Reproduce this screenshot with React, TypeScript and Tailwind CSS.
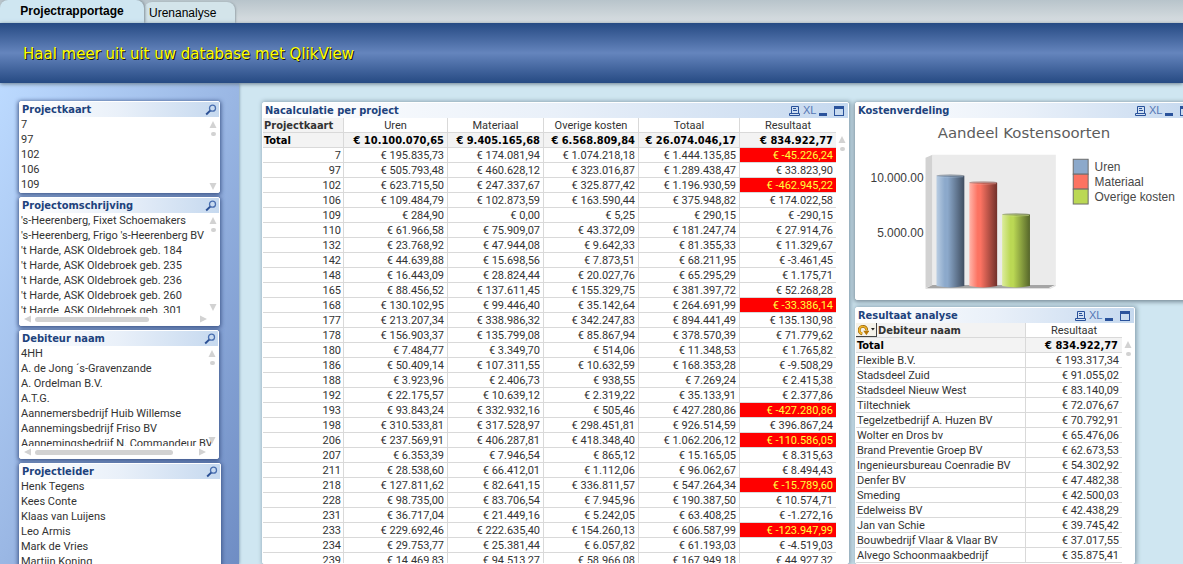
import type { ReactNode } from "react";

const projects = [
  ["7", "195.835,73", "174.081,94", "1.074.218,18", "1.444.135,85", "-45.226,24"],
  ["97", "505.793,48", "460.628,12", "323.016,87", "1.289.438,47", "33.823,90"],
  ["102", "623.715,50", "247.337,67", "325.877,42", "1.196.930,59", "-462.945,22"],
  ["106", "109.484,79", "102.873,59", "163.590,44", "375.948,82", "174.022,58"],
  ["109", "284,90", "0,00", "5,25", "290,15", "-290,15"],
  ["110", "61.966,58", "75.909,07", "43.372,09", "181.247,74", "27.914,76"],
  ["132", "23.768,92", "47.944,08", "9.642,33", "81.355,33", "11.329,67"],
  ["142", "44.639,88", "15.698,56", "7.873,51", "68.211,95", "-3.461,45"],
  ["148", "16.443,09", "28.824,44", "20.027,76", "65.295,29", "1.175,71"],
  ["165", "88.456,52", "137.611,45", "155.329,75", "381.397,72", "52.268,28"],
  ["168", "130.102,95", "99.446,40", "35.142,64", "264.691,99", "-33.386,14"],
  ["177", "213.207,34", "338.986,32", "342.247,83", "894.441,49", "135.130,98"],
  ["178", "156.903,37", "135.799,08", "85.867,94", "378.570,39", "71.779,62"],
  ["180", "7.484,77", "3.349,70", "514,06", "11.348,53", "1.765,82"],
  ["186", "50.409,14", "107.311,55", "10.632,59", "168.353,28", "-9.508,29"],
  ["188", "3.923,96", "2.406,73", "938,55", "7.269,24", "2.415,38"],
  ["192", "22.175,57", "10.639,12", "2.319,22", "35.133,91", "2.377,86"],
  ["193", "93.843,24", "332.932,16", "505,46", "427.280,86", "-427.280,86"],
  ["198", "310.533,81", "317.528,97", "298.451,81", "926.514,59", "396.867,24"],
  ["206", "237.569,91", "406.287,81", "418.348,40", "1.062.206,12", "-110.586,05"],
  ["207", "6.353,39", "7.946,54", "865,12", "15.165,05", "8.315,63"],
  ["211", "28.538,60", "66.412,01", "1.112,06", "96.062,67", "8.494,43"],
  ["218", "127.811,62", "82.641,15", "336.811,57", "547.264,34", "-15.789,60"],
  ["228", "98.735,00", "83.706,54", "7.945,96", "190.387,50", "10.574,71"],
  ["231", "36.717,04", "21.449,16", "5.242,05", "63.408,25", "-1.272,16"],
  ["233", "229.692,46", "222.635,40", "154.260,13", "606.587,99", "-123.947,99"],
  ["234", "29.753,77", "25.381,44", "6.057,82", "61.193,03", "-4.519,03"],
  ["239", "14.469,83", "94.513,27", "58.966,08", "167.949,18", "44.927,32"],
];

const debtors = [
  ["Flexible B.V.", "193.317,34"],
  ["Stadsdeel Zuid", "91.055,02"],
  ["Stadsdeel Nieuw West", "83.140,09"],
  ["Tiltechniek", "72.076,67"],
  ["Tegelzetbedrijf A. Huzen BV", "70.792,91"],
  ["Wolter en Dros bv", "65.476,06"],
  ["Brand Preventie Groep BV", "62.673,53"],
  ["Ingenieursbureau Coenradie BV", "54.302,92"],
  ["Denfer BV", "47.482,38"],
  ["Smeding", "42.500,03"],
  ["Edelweiss BV", "42.438,29"],
  ["Jan van Schie", "39.745,42"],
  ["Bouwbedrijf Vlaar & Vlaar BV", "37.017,55"],
  ["Alvego Schoonmaakbedrijf", "35.875,41"],
];

// results below this amount get the red background
const LOSS_LIMIT = -10000;

function isLoss(amount: string) {
  return Number(amount.replace(/\./g, "").replace(",", ".")) < LOSS_LIMIT;
}

function SearchIcon() {
  return (
    <svg width="12" height="12" viewBox="0 0 12 12" fill="none">
      <circle cx="7.5" cy="4.2" r="3" stroke="#4a6fb0" strokeWidth="1.3" />
      <path d="M5.2 6.6 1.2 10.4" stroke="#2a4f94" strokeWidth="2" />
    </svg>
  );
}

function WindowButtons() {
  return (
    <div className="flex items-center gap-[3px] pr-[3px] text-[#2a529b]">
      <button aria-label="Afdrukken">
        <svg width="12" height="12" viewBox="0 0 12 12" className="block" fill="none" stroke="currentColor">
          <path d="M3.5 8V1.500h7V8M5 3.500h3M5 5.500h4M1.500 8.500h10v2h-10z" />
        </svg>
      </button>
      <button className="w-3 font-['Liberation_Sans',sans-serif] text-[11px] leading-[15px] text-[#5577b5]">
        XL
      </button>
      <button aria-label="Minimaliseren">
        <svg width="12" height="12" viewBox="0 0 12 12" className="block">
          <path d="M1 8h8v3H1z" fill="currentColor" />
        </svg>
      </button>
      <button aria-label="Maximaliseren">
        <svg width="12" height="12" viewBox="0 0 12 12" className="block">
          <path d="M1 1h10v10H1zM2 4v6h8V4z" fill="currentColor" fillRule="evenodd" />
        </svg>
      </button>
    </div>
  );
}

function Panel({ title, actions, className, children }: {
  title: string;
  actions: ReactNode;
  className: string;
  children: ReactNode;
}) {
  return (
    <section className={`flex flex-col overflow-hidden rounded-xs border border-white bg-white ${className}`}>
      <header className="flex h-[15px] shrink-0 items-center justify-between bg-linear-to-r from-white via-[#e9f0f9] to-[#c6d9ef] pl-0.5">
        <h2 className="font-['DejaVu_Sans_Condensed','DejaVu_Sans',sans-serif] text-[11px] leading-[15px] font-bold text-[#20427c]">
          {title}
        </h2>
        {actions}
      </header>
      {children}
    </section>
  );
}

function ScrollMarks({ full }: { full?: boolean }) {
  return (
    <div className="flex w-3 shrink-0 flex-col items-center gap-1 pt-1">
      <svg width="8" height="7" viewBox="0 0 8 7"><path d="M4 0 7.5 7h-7z" fill="#d2d2d2" /></svg>
      <span className="h-1 w-[5px] rounded-full bg-[#d2d2d2]" />
      {full && (
        <svg width="8" height="7" viewBox="0 0 8 7" className="mt-auto mb-0.5">
          <path d="M4 7 .5 0h7z" fill="#d2d2d2" />
        </svg>
      )}
    </div>
  );
}

function ListBox({ title, items, className, thumb, scroll = true }: {
  title: string;
  items: string[];
  className: string;
  thumb?: string;
  scroll?: boolean;
}) {
  return (
    <Panel
      title={title}
      className={`shadow-[0_1px_4px_1px_#3d5588] ${className}`}
      actions={<button aria-label={`Zoek in ${title}`} className="pr-0.5"><SearchIcon /></button>}
    >
      <div className="flex min-h-0 flex-1">
        <ul className="min-w-0 flex-1 overflow-x-visible overflow-y-clip pl-px">
          {items.map((item) => (
            <li key={item} className="h-[15px] whitespace-nowrap">{item}</li>
          ))}
        </ul>
        {scroll && <ScrollMarks full />}
      </div>
      {thumb && (
        <div className="flex h-3 shrink-0 items-center pr-3 pl-1">
          <svg width="7" height="8" viewBox="0 0 7 8"><path d="M0 4 7 .5v7z" fill="#d2d2d2" /></svg>
          <span className={`ml-1 h-[5px] rounded-full bg-[#d2d2d2] ${thumb}`} />
          <svg width="7" height="8" viewBox="0 0 7 8" className="ml-auto"><path d="M7 4 0 .5v7z" fill="#d2d2d2" /></svg>
        </div>
      )}
    </Panel>
  );
}

const cell = "h-[15px] border-b border-r border-[#d9d9d9] p-0 pt-0.5 leading-3 whitespace-nowrap last:border-r-0";
const boldCell = `${cell} font-['DejaVu_Sans_Condensed','DejaVu_Sans',sans-serif] font-bold`;

function ProjectTable() {
  return (
    <table className="w-full table-fixed border-separate border-spacing-0">
      <colgroup>
        <col className="w-[81px]" />
        <col className="w-[104px]" />
        <col className="w-24" />
        <col className="w-[95px]" />
        <col className="w-[101px]" />
        <col />
      </colgroup>
      <thead>
        <tr>
          <th className={`${boldCell} bg-[#f3f3f3] pl-px text-left`}>Projectkaart</th>
          {["Uren", "Materiaal", "Overige kosten", "Totaal", "Resultaat"].map((name) => (
            <th key={name} className={`${cell} text-center font-normal`}>{name}</th>
          ))}
        </tr>
        <tr className="bg-[#f3f3f3] text-black">
          <th className={`${boldCell} pl-px text-left`}>Total</th>
          {["10.100.070,65", "9.405.165,68", "6.568.809,84", "26.074.046,17", "834.922,77"].map((sum) => (
            <th key={sum} className={`${boldCell} pr-[3px] text-right`}>€ {sum}</th>
          ))}
        </tr>
      </thead>
      <tbody>
        {projects.map(([id, ...amounts]) => (
          <tr key={id}>
            <td className={`${cell} pr-0.5 text-right`}>{id}</td>
            {amounts.map((amount, i) => (
              <td
                key={i}
                className={`${cell} pr-[3px] text-right ${i === 4 && isLoss(amount) ? "bg-[#ff0000] text-[#ffff3c]" : ""}`}
              >
                € {amount}
              </td>
            ))}
          </tr>
        ))}
      </tbody>
    </table>
  );
}

function DebtorTable() {
  return (
    <table className="w-full table-fixed border-separate border-spacing-0">
      <colgroup>
        <col />
        <col className="w-24" />
      </colgroup>
      <thead>
        <tr>
          <th className="h-[15px] border-r border-b border-[#d9d9d9] bg-[#f3f3f3] p-0 text-left font-['DejaVu_Sans_Condensed','DejaVu_Sans',sans-serif] font-bold">
            <div className="flex h-[14px] items-center gap-px">
              <button aria-label="Wissel dimensie" className="flex h-[14px] w-[21px] items-center border-r border-b border-[#444] bg-[#f6f3ea] pl-0.5">
                <svg width="12" height="12" viewBox="0 0 12 12" fill="none">
                  <path d="M4.500 10A4 4 0 1 1 9.200 6.500" stroke="#8a5a08" strokeWidth="3" />
                  <path d="M4.500 9.800A3.800 3.800 0 1 1 9 6.500" stroke="#f0b429" strokeWidth="1.800" />
                  <path d="M5.500 6.800H12L9 11.500z" fill="#b87708" />
                </svg>
                <svg width="5" height="3" viewBox="0 0 5 3" className="ml-0.5"><path d="M0 0h4L2 2.500z" fill="#222" /></svg>
              </button>
              Debiteur naam
            </div>
          </th>
          <th className={`${cell} text-center font-normal`}>Resultaat</th>
        </tr>
        <tr className="bg-[#f3f3f3] text-black">
          <th className={`${boldCell} pl-px text-left`}>Total</th>
          <th className={`${boldCell} pr-1 text-right`}>€ 834.922,77</th>
        </tr>
      </thead>
      <tbody>
        {debtors.map(([name, amount]) => (
          <tr key={name}>
            <td className={`${cell} pl-px`}>{name}</td>
            <td className={`${cell} pr-[3px] text-right`}>€ {amount}</td>
          </tr>
        ))}
      </tbody>
    </table>
  );
}

const bars = [
  { name: "Uren", x: 80, top: 58, light: "#b9cde2", mid: "#8ca9cb", dark: "#3f4d60" },
  { name: "Materiaal", x: 113, top: 65, light: "#ffb5aa", mid: "#fc7362", dark: "#71302a" },
  { name: "Overige kosten", x: 146, top: 97, light: "#dcec9c", mid: "#bbd854", dark: "#55652a" },
];

function CostChart() {
  return (
    <svg width="337" height="182" viewBox="0 0 337 182" className="block" role="img" aria-label="Aandeel Kostensoorten">
      <defs>
        {bars.map((b) => (
          <linearGradient key={b.name} id={`bar-${b.x}`}>
            <stop offset="0" stopColor={b.light} />
            <stop offset="0.3" stopColor={b.mid} />
            <stop offset="0.4" stopColor={b.mid} />
            <stop offset="1" stopColor={b.dark} />
          </linearGradient>
        ))}
      </defs>
      <text x="168" y="20" textAnchor="middle" fontSize="15" fill="#5c5c5c" fontFamily="'DejaVu Sans', sans-serif">
        Aandeel Kostensoorten
      </text>
      <path d="M69 40 76 37v131l-7 3z" fill="#d2d2d2" />
      <path d="M76 37h124v132H76z" fill="#ebebeb" />
      <path d="M70 171 76 168h123l-6 3z" fill="#a5a5a5" />
      <path d="M69 171.500h125l6-3" fill="none" stroke="#dedede" />
      {bars.map((b) => (
        <g key={b.name}>
          <path d={`M${b.x} ${b.top}h28V169q-14 3-28 0z`} fill={`url(#bar-${b.x})`} />
          <ellipse cx={b.x + 14} cy={b.top} rx="14" ry="1.500" fill={b.dark} fillOpacity="0.400" />
          <path d={`M${b.x + 1} ${b.top + 1}q13 1 26 0`} stroke={b.light} strokeOpacity="0.500" fill="none" />
        </g>
      ))}
      <g fontSize="12" fill="#3c3c3c" fontFamily="'Liberation Sans', sans-serif" textAnchor="end">
        <text x="67" y="64">10.000.00</text>
        <text x="67" y="120">5.000.00</text>
      </g>
      {bars.map((b, i) => (
        <g key={b.name} fontFamily="'Liberation Sans', sans-serif">
          <rect x="217.500" y={41.5 + i * 15} width="15" height="15" fill={b.mid} stroke="#6c6c6c" />
          <text x="239" y={53 + i * 15} fontSize="12" fill="#484848">{b.name}</text>
        </g>
      ))}
    </svg>
  );
}

export default function App() {
  return (
    <div className="flex h-screen flex-col overflow-hidden bg-[#cfe6f1] font-['Roboto',sans-serif] text-[11px] leading-[15px] text-[#333]">
      <nav className="flex h-[23px] shrink-0 items-end bg-linear-to-b from-[#b8c4cb] to-[#d9dfe2] font-['Liberation_Sans',sans-serif] text-xs text-black">
        <a href="#projectrapportage" className="z-10 flex h-full w-36 items-center justify-center rounded-t-lg bg-[#cfe6f1] pb-0.5 font-bold shadow-[1px_0_3px_#7d8a93]">
          Projectrapportage
        </a>
        <a href="#urenanalyse" className="flex h-[21px] w-[91px] items-center rounded-t-lg bg-[#d3e4ea] pl-[5px] shadow-[1px_0_2px_#9aa6ad]">
          Urenanalyse
        </a>
      </nav>

      <header className="z-10 flex h-[60px] shrink-0 items-center bg-linear-to-b from-[#264a83] via-[#6585bd] to-[#264a83] pt-0.5 pl-[23px] shadow-[0_1px_4px_#6b7c8c]">
        <h1 className="font-['DejaVu_Sans',sans-serif] text-[15px] leading-5 text-[#ffff00] [text-shadow:1px_1px_0_#111]">
          Haal meer uit uit uw database met QlikView
        </h1>
      </header>

      <div className="flex min-h-0 flex-1">
        {/* Selection list boxes */}
        <aside className="flex w-[239px] shrink-0 flex-col gap-1 overflow-hidden bg-linear-to-br from-[#bcdaff] via-[#9ab7e4] to-[#6f8dc4] pt-[18px] pl-[19px] shadow-[0_0_3px_#5f7f95]">
          <ListBox title="Projectkaart" items={["7", "97", "102", "106", "109"]} className="h-[92px] w-[201px] shrink-0" />
          <ListBox
            title="Projectomschrijving"
            items={[
              "'s-Heerenberg, Fixet Schoemakers",
              "'s-Heerenberg, Frigo 's-Heerenberg BV",
              "'t Harde, ASK Oldebroek geb. 184",
              "'t Harde, ASK Oldebroek geb. 235",
              "'t Harde, ASK Oldebroek geb. 236",
              "'t Harde, ASK Oldebroek geb. 260",
              "'t Harde, ASK Oldebroek geb. 301",
            ]}
            className="h-[129px] w-[201px] shrink-0"
            thumb="w-[114px]"
          />
          <ListBox
            title="Debiteur naam"
            items={[
              "4HH",
              "A. de Jong ´s-Gravenzande",
              "A. Ordelman B.V.",
              "A.T.G.",
              "Aannemersbedrijf Huib Willemse",
              "Aannemingsbedrijf Friso BV",
              "Aannemingsbedrijf N. Commandeur BV",
            ]}
            className="h-[129px] w-[200px] shrink-0"
            thumb="w-[138px]"
          />
          <ListBox
            title="Projectleider"
            items={["Henk Tegens", "Kees Conte", "Klaas van Luijens", "Leo Armis", "Mark de Vries", "Martijn Koning"]}
            className="h-40 w-[202px] shrink-0"
            scroll={false}
          />
        </aside>

        <main className="flex min-w-0 flex-1 gap-1.5 overflow-hidden pt-[19px] pl-[23px]">
          <Panel title="Nacalculatie per project" className="w-[587px] shrink-0 shadow-[1px_0_4px_1px_#8da5b3]" actions={<WindowButtons />}>
            <div className="flex min-h-0">
              <div className="min-w-0 flex-1"><ProjectTable /></div>
              <div className="pt-3.5"><ScrollMarks /></div>
            </div>
          </Panel>

          <div className="flex shrink-0 flex-col gap-[7px]">
            <Panel title="Kostenverdeling" className="h-[198px] w-[340px] shrink-0 shadow-[0_1px_4px_1px_#7a8d99]" actions={<WindowButtons />}>
              <CostChart />
            </Panel>
            <Panel title="Resultaat analyse" className="min-h-0 w-[280px] flex-1 shadow-[1px_0_4px_1px_#8da5b3]" actions={<WindowButtons />}>
              <div className="flex min-h-0">
                <div className="min-w-0 flex-1"><DebtorTable /></div>
                <div className="pt-3.5"><ScrollMarks /></div>
              </div>
            </Panel>
          </div>
        </main>
      </div>
    </div>
  );
}
